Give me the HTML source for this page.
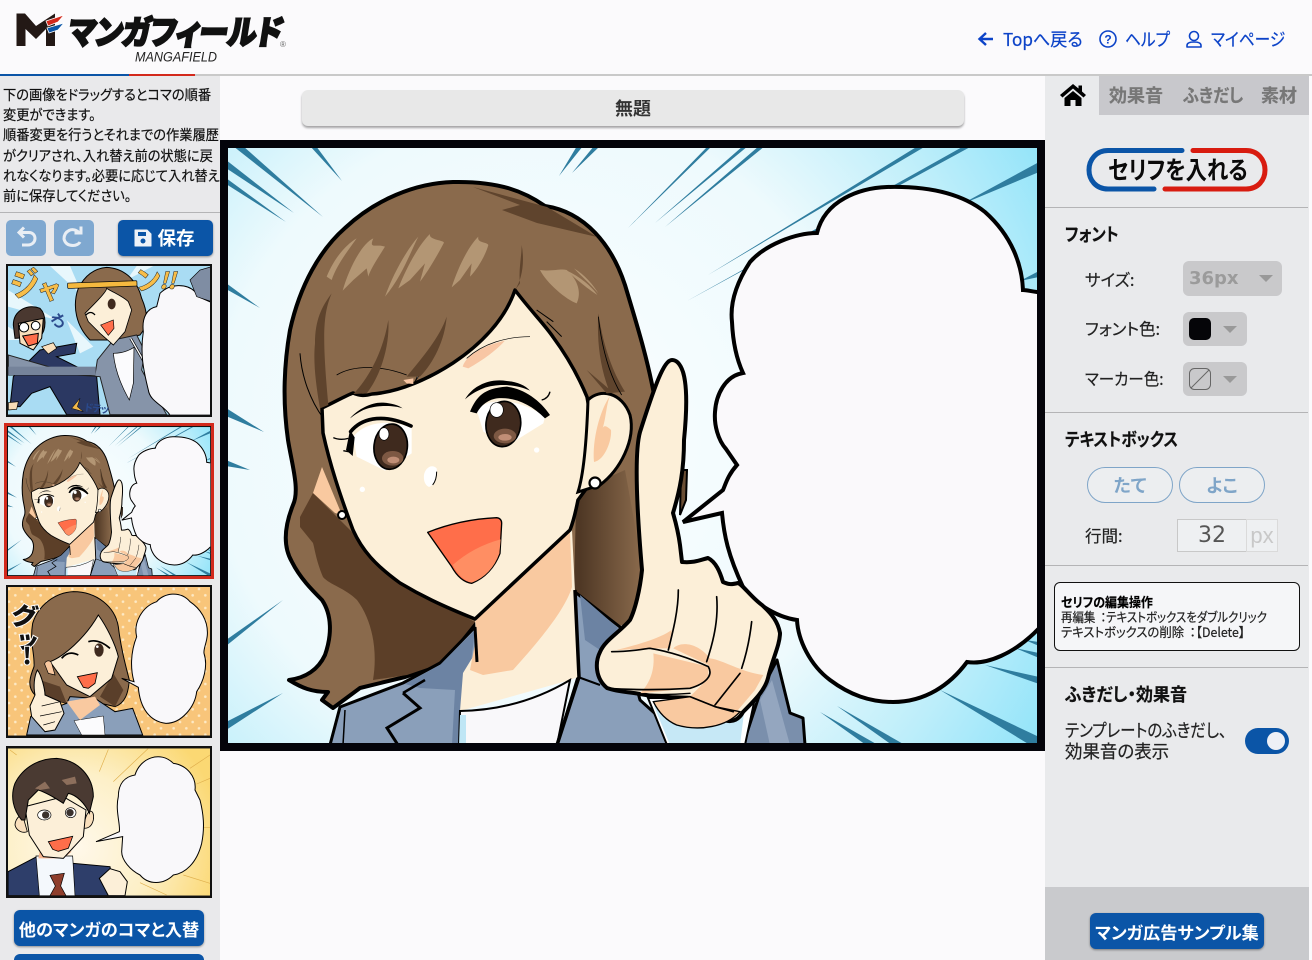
<!DOCTYPE html>
<html lang="ja"><head><meta charset="utf-8"><title>マンガフィールド</title>
<style>
html,body{margin:0;padding:0;background:#fbfafc;width:1312px;height:960px;overflow:hidden}
#root{position:absolute;left:0;top:0;width:1312px;height:960px;overflow:hidden;font-family:"Liberation Sans","Noto Sans CJK JP",sans-serif;color:#111;font-feature-settings:"palt"}
.a{position:absolute;white-space:nowrap;line-height:1}
.s{transform-origin:0 0;-webkit-text-stroke:.2px currentColor}
.j{font-family:"Noto Sans CJK JP","Liberation Sans",sans-serif}
.b{font-weight:700}
.btn{position:absolute;background:#0b55a7;color:#fff;border-radius:6px;box-shadow:0 1px 2px rgba(0,0,0,.4);font-weight:700;display:flex;align-items:center;justify-content:center;white-space:nowrap}
.hr{position:absolute;height:1px;background:#b4b4b6}
.nav{color:#0c43c8;font-size:18px;top:30px}
.tab{color:#777;font-size:18px;font-weight:700;top:86px}
.lab{font-size:16.5px;color:#222}
.sel{position:absolute;background:#c9c9cb;border-radius:6px}
.tri{position:absolute;width:0;height:0;border-left:7px solid transparent;border-right:7px solid transparent;border-top:7px solid #999}
.pill{position:absolute;width:84px;height:34px;border:1px solid #7fa5c8;border-radius:18px;color:#7fa5c8;font-weight:700;font-size:18px;display:flex;align-items:center;justify-content:center;background:#eceef0}
</style></head><body><div id="root">

<!-- panels -->
<div style="position:absolute;left:0;top:76px;width:220px;height:884px;background:#e9e9eb"></div>
<div style="position:absolute;left:1045px;top:76px;width:264px;height:884px;background:#e9eaec"></div>
<div style="position:absolute;left:1045px;top:887px;width:264px;height:73px;background:#c9cacd"></div>
<div style="position:absolute;left:0;top:74px;width:1312px;height:2px;background:#c9c9c9"></div>
<div style="position:absolute;left:0;top:74px;width:129px;height:2px;background:#0b55a7"></div>
<div style="position:absolute;left:129px;top:74px;width:66px;height:2px;background:#d3291c"></div>

<!-- art -->
<svg width="1312" height="960" viewBox="0 0 1312 960" style="position:absolute;left:0;top:0" xmlns="http://www.w3.org/2000/svg">
<defs>
<radialGradient id="sky" gradientUnits="userSpaceOnUse" cx="540" cy="440" r="590">
<stop offset="0" stop-color="#fbfeff"/><stop offset=".55" stop-color="#eefafd"/><stop offset=".8" stop-color="#bdeefa"/><stop offset="1" stop-color="#8fe3f9"/></radialGradient>
<radialGradient id="yel" gradientUnits="userSpaceOnUse" cx="230" cy="800" r="440">
<stop offset="0" stop-color="#fff8ea"/><stop offset=".5" stop-color="#fdf0c8"/><stop offset="1" stop-color="#fbd873"/></radialGradient>
<linearGradient id="rh" gradientUnits="userSpaceOnUse" x1="580" y1="540" x2="642" y2="540"><stop offset="0" stop-color="#4f3825"/><stop offset="1" stop-color="#8a6a4c"/></linearGradient>
<pattern id="dots" width="38" height="38" patternUnits="userSpaceOnUse"><rect width="38" height="38" fill="#f8c57a"/><circle cx="8" cy="8" r="4" fill="#fde9c4"/><circle cx="27" cy="27" r="4" fill="#fde9c4"/></pattern>
<clipPath id="mc"><rect x="228" y="148" width="809" height="595"/></clipPath>
<clipPath id="t1"><rect x="24" y="18" width="606" height="446"/></clipPath>
<clipPath id="t3"><rect x="24" y="21" width="606" height="446"/></clipPath>
<clipPath id="t4"><rect x="24" y="505" width="606" height="442"/></clipPath>
<g id="scene" clip-path="url(#mc)">
<rect x="228" y="148" width="809" height="595" fill="url(#sky)"/>
<g fill="#2f7d9f">
<polygon points="233,146 243,146 323,217"/><polygon points="226,160 226,168 294,213"/><polygon points="226,178 226,184 286,222"/><polygon points="310,146 316,146 342,181"/>
<polygon points="577,146 583,146 559,176"/><polygon points="594,146 600,146 572,173"/>
<polygon points="226,283 226,289 260,308"/><polygon points="226,408 226,416 264,432"/><polygon points="226,640 226,646 283,600"/><polygon points="226,722 226,730 283,693"/><polygon points="226,460 226,466 250,470"/>
<polygon points="708,146 712,146 628,228"/><polygon points="743,146 748,146 655,223"/><polygon points="759,146 765,146 665,227"/>
<polygon points="918,146 926,146 708,275"/><polygon points="964,146 972,146 687,301"/><polygon points="1039,162 1039,172 960,205"/><polygon points="1039,271 1039,277 1020,281"/>
<polygon points="837,706 905,745 892,745"/><polygon points="820,712 878,745 866,745"/><polygon points="940,690 1039,737 1039,745 1030,745"/><polygon points="985,665 1039,677 1039,684"/><polygon points="1015,648 1039,653 1039,658"/><polygon points="1025,640 1039,642 1039,646"/>
</g>
<!-- bubble -->
<path d="M1042 292 L1037 292 C1030 291 1026 290 1023 290 C1022 265 1012 236 985 212 C960 192 925 186 887 187 C860 188 825 200 817 233 C795 233 765 245 750 262 C735 285 730 305 732 322 C733 345 737 360 743 373 C725 376 716 395 715 412 C714 425 718 440 726 449 L737 465 C728 475 726 483 723 490 L683 522 L722 513 C724 535 728 555 743 587 C750 600 775 617 797 620 C798 640 810 665 830 680 C850 695 870 702 893 702 C925 702 950 685 967 662 C985 665 1015 655 1042 625 Z" fill="#faf9fb" stroke="#000" stroke-width="4"/>
<!-- back hair -->
<path d="M453 182C500 181 525 192 545 206C585 212 612 245 625 285C637 325 648 360 655 400L640 632L575 590L473 625L440 665L405 677L360 688L333 708L322 700L328 692C312 692 302 688 289 680C305 678 318 670 325 655C332 635 332 615 322 600C312 590 300 578 292 562C282 545 285 525 293 505C300 490 292 465 288 440C283 405 283 370 290 330C300 285 320 250 345 228C375 200 415 183 453 182Z" fill="#8a6a4c" stroke="#000" stroke-width="4" stroke-linejoin="round"/>
<path d="M681 470L687 470L686 500L680 515Z" fill="#6a4e34" stroke="#000" stroke-width="2"/>
<!-- hair shading -->
<path d="M300 517L313 493L350 530L400 583L475 622L442 663L407 675L373 680C378 650 372 620 357 600C345 588 330 585 323 577C316 560 315 550 313 543L300 527Z" fill="#5c3f28"/>
<path d="M576 505L580 490L625 470L634 520L642 570L630 622L618 627L590 605L574 590Z" fill="url(#rh)"/>
<g fill="#5f442d"><path d="M473 187L547 207L597 237L537 223L502 210L520 205Z"/></g>
<!-- jacket -->
<path d="M330 745L340 707L403 683L440 663L475 627L480 650L463 673L460 745Z" fill="#8a9fba" stroke="#000" stroke-width="3" stroke-linejoin="round"/>
<path d="M575 592L620 627L640 700L690 745L557 745L578 677Z" fill="#8a9fba" stroke="#000" stroke-width="3" stroke-linejoin="round"/>
<path d="M580 595L618 628L600 650L585 640Z" fill="#6c83a3"/>
<path d="M440 665L475 630L470 670L462 700L458 745L452 745L455 690L420 688L405 684Z" fill="#6c83a3"/>
<path d="M403 693L420 708L387 728L398 745" fill="none" stroke="#000" stroke-width="3"/>
<path d="M403 693L425 680" fill="none" stroke="#000" stroke-width="2.5"/>
<path d="M345 710L343 745" fill="none" stroke="#000" stroke-width="1.5"/>
<path d="M578 677L600 685" fill="none" stroke="#000" stroke-width="2"/>
<path d="M777 660L790 713L803 718L805 745L743 745L760 693Z" fill="#7a8fac" stroke="#000" stroke-width="3" stroke-linejoin="round"/>
<path d="M772 680L790 745L770 745L760 700Z" fill="#94a6bf"/>
<!-- neck + shirt -->
<path d="M475 620L572 530L575 592L578 677L570 680L460 711L463 673L477 650Z" fill="#fcefd8"/>
<path d="M475 619L570 532L572 587C565 610 540 640 513 670L483 675L470 670L477 633Z" fill="#f9c9a0"/>
<path d="M460 711Q520 710 570 680L557 745L459 745Z" fill="#f9f8fa" stroke="#000" stroke-width="2"/>
<path d="M460 715L466 715L466 745L459 745Z" fill="#bfe6f5"/>
<path d="M475 627L477 662" stroke="#000" stroke-width="3" fill="none"/>
<path d="M575 590L579 677L557 745" stroke="#000" stroke-width="3.5" fill="none"/>
<!-- left ear -->
<path d="M313 493L322 467L342 515L335 513Z" fill="#f9c9a0"/>
<circle cx="342" cy="515" r="4" fill="#fff" stroke="#000" stroke-width="2"/>
<!-- face -->
<path d="M322 408C335 402 345 396 353 393C360 396 365 396 372 394C400 392 430 378 453 363C480 345 505 320 515 290C530 310 545 325 553 337C570 360 580 380 587 397L600 470L578 500C575 515 572 525 570 530L475 619C440 605 420 595 400 583C375 565 362 550 353 530C340 495 330 465 323 433Z" fill="#fcefd8" stroke="#000" stroke-width="3.500" stroke-linejoin="round"/>
<!-- ear -->
<path d="M588 400C600 388 622 392 630 415C636 440 620 470 600 485L578 492C585 470 587 430 588 400Z" fill="#fcefd8" stroke="#000" stroke-width="3"/>
<path d="M610 396C600 410 592 440 594 462C605 460 612 440 611 430C606 425 603 425 602 430C606 420 606 405 610 396Z" fill="#f9c9a0"/>
<circle cx="595" cy="483" r="5.500" fill="#fff" stroke="#000" stroke-width="2.200"/>
<!-- eyes etc (zoom 10 coords) -->
<g transform="translate(300,400) scale(.33333)">
<path d="M160 110C200 60 280 60 335 85L335 160L255 212L170 170Z" fill="#fff"/>
<ellipse cx="272" cy="140" rx="50" ry="68" fill="#3f2a1e" stroke="#000" stroke-width="5" transform="rotate(6 272 140)"/>
<ellipse cx="278" cy="175" rx="32" ry="22" fill="#7d5843"/>
<ellipse cx="280" cy="180" rx="18" ry="10" fill="#c08e76"/>
<ellipse cx="252" cy="102" rx="15" ry="19" fill="#fff" stroke="#000" stroke-width="2"/>
<path d="M152 95C180 60 240 35 333 78" fill="none" stroke="#000" stroke-width="11" stroke-linecap="round"/>
<path d="M150 90L138 150L158 168L164 112Z" fill="#000"/>
<path d="M100 113Q120 122 145 115M130 152L150 156" fill="none" stroke="#000" stroke-width="4"/>
<path d="M150 55C175 25 220 5 250 8C275 10 295 15 308 25C280 15 225 15 190 30C170 40 160 48 150 55Z" fill="#000"/>
<path d="M530 30C560 -5 650 -10 735 50L730 70L625 135L550 95Z" fill="#fff"/>
<ellipse cx="610" cy="72" rx="52" ry="68" fill="#3f2a1e" stroke="#000" stroke-width="5" transform="rotate(6 610 72)"/>
<ellipse cx="615" cy="108" rx="34" ry="22" fill="#7d5843"/>
<ellipse cx="615" cy="112" rx="20" ry="10" fill="#c08e76"/>
<ellipse cx="590" cy="30" rx="20" ry="22" fill="#fff" stroke="#000" stroke-width="2"/>
<circle cx="187" cy="268" r="8" fill="#fff"/><circle cx="710" cy="150" r="8" fill="#fff"/>
<path d="M372 225C375 205 395 190 410 205C415 230 395 265 385 260C375 255 370 240 372 225Z" fill="#fff"/>
<path d="M410 215Q410 240 398 255" stroke="#000" stroke-width="3" fill="none"/>
<path d="M383 397Q480 358 590 353Q605 355 605 370L600 460Q575 525 515 550Q480 545 455 500Z" fill="#ff6e4a" stroke="#000" stroke-width="4" stroke-linejoin="round"/>
<path d="M458 495Q520 440 602 418L598 460Q575 525 515 548Q482 540 458 495Z" fill="#ff8e63"/>
</g>
<!-- right eye lashes + brows + highlights (zoom 9 coords) -->
<g transform="translate(220,80) scale(.33333)">
<path d="M750 995C770 950 790 925 860 920C910 925 960 960 990 1005L975 1015C930 970 880 950 830 955C800 960 780 980 770 1000Z" fill="#000"/>
<path d="M735 958C760 915 810 895 860 903C890 905 915 915 930 932C890 912 830 910 790 925C765 935 750 945 735 958Z" fill="#000"/>
<path d="M965 960Q985 955 990 935" stroke="#000" stroke-width="4" fill="none"/>
<path d="M728 860C740 820 800 795 855 782C830 810 790 840 745 865Z" fill="#f8c6a4"/>
<path d="M740 835C790 790 860 770 930 770" stroke="#000" stroke-width="2" fill="none"/>
<path d="M350 885C400 855 480 855 560 885" stroke="#000" stroke-width="2.500" fill="none"/>
<path d="M550 900L580 895L580 912L560 910Z" fill="#f8c6a4"/>
<path d="M585 905L620 825L605 875Z" fill="#fff" stroke="#000" stroke-width="2"/>
<g fill="#b39674">
<path d="M320 590C340 540 375 495 410 475C385 510 350 555 335 600Z"/>
<path d="M368 632C385 570 425 490 460 475C445 510 470 490 495 500C470 540 450 570 445 590L440 565L400 600Z"/>
<path d="M495 650C520 580 560 510 595 470C570 520 545 590 495 650Z"/>
<path d="M535 625C560 560 600 490 630 462C625 480 670 480 672 488C650 530 620 580 600 605L615 550L570 600Z"/>
<path d="M695 622C715 560 745 500 775 470C770 490 800 485 805 495C795 530 770 570 750 590L755 550L720 600Z"/>
<path d="M960 570C1000 575 1020 565 1040 570C1075 600 1085 640 1070 670C1040 660 980 610 960 570Z"/>
<path d="M1040 572C1080 590 1115 620 1132 645C1100 625 1060 590 1040 572Z"/>
<path d="M1062 565C1095 585 1120 615 1135 640C1110 610 1085 590 1062 565Z"/>
</g>
<g fill="#5f442d">
<path d="M285 790C285 720 305 680 335 640C310 700 305 760 325 975L300 985C285 900 280 840 285 790Z"/>
<path d="M400 942C450 890 490 810 505 720C510 800 480 890 440 940Z"/>
<path d="M560 890C610 830 660 770 680 710C675 780 640 850 600 890Z"/>
<path d="M1135 700C1150 800 1180 880 1215 935L1160 940L1100 870L1165 925C1140 860 1130 780 1135 700Z"/>
<path d="M905 495C915 550 905 600 885 630L900 610C895 570 905 530 905 495Z"/>
</g>
<path d="M240 820C245 890 270 960 310 1015" stroke="#000" stroke-width="3" fill="none"/>
<path d="M950 690L1000 725M980 725L1025 770" stroke="#000" stroke-width="3" fill="none"/>
<path d="M1135 710C1145 800 1165 880 1205 945" stroke="#000" stroke-width="2.500" fill="none"/>
</g>
<!-- sleeve + hand -->
<path d="M648 698L667 745L745 745L755 698Z" fill="#fff" stroke="#000" stroke-width="2"/>
<path d="M654 706L670 745L740 745L745 705Z" fill="#c6e8f6"/>
<path d="M672 360C664 360 655 385 640 432C635 450 636 500 642 570C640 590 635 610 630 620C620 632 605 640 600 652C595 662 595 678 607 688C618 692 630 692 640 694C660 698 680 697 690 698C700 703 708 705 713 707C718 722 735 727 743 712C755 700 765 690 768 678C772 660 780 645 780 633C778 622 772 614 762 605C752 598 742 584 738 583C730 585 728 584 723 582C720 572 716 562 708 558C700 560 695 563 682 562L680 545C678 530 675 520 673 513C680 490 684 470 684 440C687 410 687 385 683 372C680 363 676 360 672 360Z" fill="#fcefd8" stroke="#000" stroke-width="4" stroke-linejoin="round"/>
<g transform="translate(300,400) scale(.33333)">
<g fill="#f9c9a0">
<path d="M950 750C1010 735 1080 715 1115 690L1112 745L1050 745Z"/>
<path d="M1060 760L1225 800L1225 840L1170 865L1020 880C1050 850 1065 810 1060 760Z"/>
<path d="M1120 745C1140 725 1190 725 1230 775C1270 780 1320 815 1390 825L1365 870L1310 935L1245 920L1170 890L1230 830L1225 795Z"/>
<path d="M1060 905L1170 890L1245 920L1320 935C1280 980 1200 995 1130 975C1095 960 1075 935 1060 905Z" stroke="#000" stroke-width="4"/>
</g>
<g fill="none" stroke="#000" stroke-linecap="round" stroke-linejoin="round">
<path d="M935 755C1000 755 1040 745 1050 745C1110 755 1170 775 1225 800C1240 825 1220 850 1170 865C1090 870 1000 870 920 865" stroke-width="5"/>
<path d="M1000 880C1060 885 1110 885 1170 880" stroke-width="4"/>
<path d="M1135 570C1135 630 1120 690 1105 750" stroke-width="5"/>
<path d="M1250 590C1255 650 1245 710 1220 785" stroke-width="5"/>
<path d="M1355 665C1350 710 1340 760 1325 805" stroke-width="5"/>
<path d="M1320 820L1245 915" stroke-width="5"/>
<path d="M1170 890L1245 920L1300 935" stroke-width="5"/>
</g>
</g>
</g>
</defs>

<!-- main canvas -->
<rect x="220" y="140" width="825" height="611" fill="#04040a"/>
<use href="#scene"/>

<!-- thumb 2 -->
<rect x="4" y="423" width="210" height="156" fill="#d3291c"/>
<rect x="7" y="426" width="204" height="150" fill="#111"/>
<use href="#scene" transform="translate(-49,390.2) scale(.25,.249)"/>

<!-- thumb 1 -->
<rect x="6" y="264" width="206" height="153" fill="#111"/>
<g transform="translate(0,260) scale(.33333)"><g clip-path="url(#t1)">
<rect x="24" y="18" width="606" height="446" fill="#a9dcf3"/>
<g fill="#e8f7fc"><polygon points="24,90 170,180 24,140"/><polygon points="150,18 210,18 250,110"/><polygon points="24,200 90,240 24,240"/><polygon points="410,18 460,18 380,60"/><polygon points="200,180 280,260 240,280"/></g>
<!-- man -->
<path d="M30 440L40 350L120 270L230 250L225 280L170 290L290 350L300 464L200 464L150 380L95 400L60 440Z" fill="#2b3862" stroke="#000" stroke-width="3"/>
<path d="M25 428L55 425L50 448L25 450Z" fill="#f8dcb8" stroke="#000" stroke-width="2"/>
<path d="M40 195C40 150 85 130 120 145C140 165 140 210 120 230L45 235Z" fill="#4a3830" stroke="#000" stroke-width="3"/>
<path d="M55 190L130 175L125 235L100 270L60 250Z" fill="#f9dfbc" stroke="#000" stroke-width="3"/>
<circle cx="72" cy="202" r="14" fill="#fff" stroke="#000" stroke-width="3"/><circle cx="107" cy="197" r="13" fill="#fff" stroke="#000" stroke-width="3"/>
<path d="M68 228L115 220L112 250L85 258Z" fill="#ff6e4a" stroke="#000" stroke-width="3"/>
<path d="M125 260L160 248L170 265L145 282Z" fill="#f9dfbc" stroke="#000" stroke-width="2"/>
<path d="M215 445L240 415L232 440L250 455Z" fill="#f2b84a" stroke="#000" stroke-width="1.500"/>
<!-- woman -->
<path d="M320 22C380 25 415 70 425 115C440 150 450 190 420 225L350 240L270 240C230 200 215 140 235 85C255 45 285 25 320 22Z" fill="#8a6a4c" stroke="#000" stroke-width="3"/>
<path d="M232 345L25 285L25 345L285 345L292 300L340 240L410 225L435 275L425 330L500 464L330 464L300 350Z" fill="#8694a9" stroke="#222" stroke-width="3"/>
<rect x="25" y="320" width="262" height="25" fill="#75839a"/>
<path d="M340 280Q375 280 402 262L400 370L388 420C365 380 345 330 340 280Z" fill="#fbfbfd" stroke="#000" stroke-width="2"/>
<path d="M255 160C285 130 320 95 320 85C345 100 370 110 385 125L395 150L375 215L340 255L300 220L265 185Z" fill="#fcefd8" stroke="#000" stroke-width="2.500"/>
<path d="M258 165Q272 150 285 165" stroke="#000" stroke-width="4" fill="none"/>
<ellipse cx="335" cy="132" rx="12" ry="16" fill="#3f2a1e"/>
<path d="M302 195L340 180L342 205L325 226Z" fill="#ff6e4a" stroke="#000" stroke-width="2"/>
<path d="M392 235L435 310" stroke="#000" stroke-width="8"/><path d="M392 235L435 310" stroke="#fff" stroke-width="4"/>
<!-- bubble -->
<path d="M640 130L595 110L585 95C560 70 510 70 480 100L470 140C440 145 425 175 430 215C420 280 430 330 445 390C450 425 490 435 510 465L640 465Z" fill="#f9f8fa" stroke="#000" stroke-width="3"/>
<path d="M570 60L600 30L635 20L635 125L590 110Z" fill="#7f8da3" stroke="#000" stroke-width="2"/>
<rect x="203" y="66" width="208" height="16" rx="3" fill="#f5b93f" stroke="#000" stroke-width="2" transform="rotate(-2 300 76)"/>
<g font-family="Noto Sans CJK JP,sans-serif" font-weight="700" fill="#f7bd48" stroke="#222" stroke-width="3" paint-order="stroke">
<text x="36" y="112" font-size="92" transform="rotate(-12 40 100)">ジ</text><text x="118" y="120" font-size="76" transform="rotate(-8 120 110)">ャ</text>
<text x="412" y="90" font-size="78" transform="rotate(-5 415 85)">ン</text><text x="478" y="86" font-size="66" font-style="italic">!!</text>
</g>
<text x="150" y="200" font-family="Noto Sans CJK JP,sans-serif" font-size="46" font-weight="700" fill="#2b4a8c" transform="rotate(60 175 185) translate(0,0)">わ</text>
<text x="252" y="452" font-family="Noto Sans CJK JP,sans-serif" font-size="30" font-weight="700" fill="#2b4a8c" textLength="75" transform="rotate(6 252 452)">ドテッ</text>
</g></g>

<!-- thumb 3 -->
<rect x="6" y="585" width="206" height="153" fill="#111"/>
<g transform="translate(0,580) scale(.33333)"><g clip-path="url(#t3)">
<rect x="24" y="21" width="606" height="446" fill="url(#dots)"/>
<path d="M220 35C290 35 345 80 355 140C362 200 375 250 388 300C385 340 375 370 345 380L280 365L200 370L105 345C80 320 90 290 102 260C105 220 88 190 98 130C115 75 165 38 220 35Z" fill="#8a6a4c" stroke="#000" stroke-width="3"/>
<path d="M125 350L120 300L180 320L200 370Z" fill="#5a3f2a"/><path d="M300 350L340 280L370 330L345 380Z" fill="#5a3f2a"/>
<path d="M80 465L92 410L200 370L210 350L285 355L345 395L398 385L428 465Z" fill="#8a9fba" stroke="#000" stroke-width="3"/>
<path d="M222 422L310 408L315 465L245 465Z" fill="#fbfbfd" stroke="#000" stroke-width="1.500"/>
<path d="M200 365L285 350L300 375L240 420Z" fill="#f9c9a0"/>
<path d="M150 245C190 230 255 175 295 105C320 140 345 190 355 230L335 295L270 350L200 315Z" fill="#fcefd8" stroke="#000" stroke-width="3"/>
<path d="M135 255C130 245 150 235 155 250L165 285L145 280Z" fill="#f9c9a0" stroke="#000" stroke-width="2"/>
<path d="M185 235Q205 210 235 225" stroke="#000" stroke-width="5" fill="none"/>
<ellipse cx="297" cy="210" rx="14" ry="20" fill="#3f2a1e"/><circle cx="292" cy="200" r="4" fill="#fff"/>
<path d="M265 185Q295 175 330 205" stroke="#000" stroke-width="5" fill="none"/>
<path d="M232 290L292 278L285 310L265 325L250 322Z" fill="#ff6e4a" stroke="#000" stroke-width="2.500"/>
<path d="M112 270C125 285 135 330 135 345L180 365L192 400L165 450L135 455L95 410L90 378L105 345C100 320 102 290 112 270Z" fill="#fcefd8" stroke="#000" stroke-width="3"/>
<path d="M125 378L180 365M120 408L185 395M130 435L165 425" stroke="#000" stroke-width="2"/>
<path d="M410 170C400 130 425 80 470 65C490 40 540 30 570 65C600 85 625 120 622 165C620 190 610 205 612 220C625 260 610 305 590 335C585 380 545 430 498 430C450 425 420 385 415 322L365 295L402 305C392 270 390 220 410 170Z" fill="#f9f8fa" stroke="#000" stroke-width="3"/>
<g font-family="Noto Sans CJK JP,sans-serif" font-weight="900" fill="#111" stroke="#fff" stroke-width="6" paint-order="stroke">
<text x="36" y="132" font-size="78" transform="rotate(12 50 100)">グ</text><text x="55" y="200" font-size="70" transform="rotate(12 60 170)">ッ</text><text x="68" y="252" font-size="68">!</text>
</g>
</g></g>

<!-- thumb 4 -->
<rect x="6" y="746" width="206" height="152" fill="#111"/>
<g transform="translate(0,580) scale(.33333)"><g clip-path="url(#t4)">
<rect x="24" y="505" width="606" height="442" fill="url(#yel)"/>
<g stroke="#e0b04e" stroke-width="2"><path d="M30 510L50 525M325 508L298 575M445 505L340 605M630 525L570 565M630 595L590 612M630 742L610 742M630 910L550 885M500 945L420 908"/></g>
<path d="M24 875L110 830L130 880L220 850L330 860L345 947L24 947Z" fill="#2e3e6a" stroke="#000" stroke-width="3"/>
<path d="M108 828L218 828L225 947L118 947Z" fill="#f4f8fc" stroke="#000" stroke-width="2"/>
<path d="M150 886L193 880L182 918L198 947L150 947L166 918Z" fill="#8e3e2c" stroke="#000" stroke-width="2"/>
<path d="M115 835L190 835L215 815L120 810Z" fill="#f7b48e"/>
<path d="M72 720C70 690 45 715 45 735C50 755 70 760 82 755Z" fill="#f9dfbc" stroke="#000" stroke-width="2.500"/>
<path d="M255 720C265 680 285 690 280 720C275 740 265 745 250 745Z" fill="#f9dfbc" stroke="#000" stroke-width="2.500"/>
<path d="M75 680L190 650L258 690L250 770L190 835L130 830L88 765Z" fill="#fcefd8" stroke="#000" stroke-width="3"/>
<path d="M65 720C40 690 30 650 45 610C70 560 120 535 170 535C235 540 280 590 280 650L268 700C255 670 230 645 205 640L190 670C160 650 130 635 115 630L85 660L75 720Z" fill="#4a3a32" stroke="#000" stroke-width="3"/>
<g fill="#8d6f5c"><path d="M105 625L135 605L150 625L120 630Z"/><path d="M185 600L225 590L230 610L200 615Z"/></g>
<ellipse cx="133" cy="705" rx="20" ry="15" fill="#fff" stroke="#000" stroke-width="2"/><ellipse cx="212" cy="698" rx="16" ry="15" fill="#fff" stroke="#000" stroke-width="2"/>
<circle cx="137" cy="705" r="11" fill="#3b322e"/><circle cx="210" cy="698" r="11" fill="#3b322e"/>
<path d="M145 785L218 769L205 805L175 814L158 808Z" fill="#ff6e4a" stroke="#000" stroke-width="2.500"/>
<path d="M298 895L330 866L360 875L382 905L375 947L325 947Z" fill="#fcefd8" stroke="#000" stroke-width="3"/>
<path d="M355 650C355 610 375 590 405 585C420 535 480 510 520 550C560 555 590 590 585 630L600 660C610 700 615 740 605 790C590 850 555 880 520 885C490 915 445 915 420 885C390 870 365 840 365 815L368 770L288 785L358 755C362 735 345 690 355 650Z" fill="#f9f8fa" stroke="#000" stroke-width="3"/>
</g></g>

<!-- logo -->
<path d="M16.500 13.500H25L36 26L55 13.500V46H46V29L36 39L25.500 29V46H16.500Z" fill="#231815"/>
<path d="M46 21L64 15L58 22L48 26Z" fill="#d3291c" stroke="#fff" stroke-width=".8"/><path d="M47 28L64 23L58 30L49 33Z" fill="#0b55a7" stroke="#fff" stroke-width=".8"/>
<text transform="translate(60,44) skewX(-9)" x="7" y="0" font-family="Noto Sans CJK JP,sans-serif" font-weight="900" font-size="33" fill="#111" stroke="#111" stroke-width="2" textLength="214" lengthAdjust="spacingAndGlyphs">マンガフィールド</text>
<text x="135" y="61.500" font-family="Liberation Sans,sans-serif" font-style="italic" font-size="13.500" fill="#222" textLength="82" lengthAdjust="spacingAndGlyphs">MANGAFIELD</text>
<text x="280" y="47" font-family="Liberation Sans,sans-serif" font-size="8" fill="#666">®</text>

<!-- nav icons -->
<path d="M993 39H980M986 33L979.500 39L986 45" fill="none" stroke="#0c43c8" stroke-width="2.400"/>
<circle cx="1108" cy="39" r="8" fill="none" stroke="#0c43c8" stroke-width="1.600"/>
<text x="1108" y="43.500" text-anchor="middle" font-family="Liberation Sans,sans-serif" font-weight="700" font-size="12" fill="#0c43c8">?</text>
<circle cx="1194" cy="36" r="4.500" fill="none" stroke="#0c43c8" stroke-width="1.600"/>
<path d="M1187 47V45.500C1187 43 1190 42 1194 42C1198 42 1201 43 1201 45.500V47Z" fill="none" stroke="#0c43c8" stroke-width="1.600" stroke-linejoin="round"/>

<!-- tabs bg + home -->
<rect x="1099" y="76" width="210" height="39" fill="#c8c8cc"/>
<path d="M1073 84L1060 95L1062.500 97.500L1073 88.500L1083.500 97.500L1086 95L1082 91.500V85.500H1078.500V88.500ZM1064.500 98V106H1070.500V100H1075.500V106H1081.500V98L1073 91Z" fill="#000"/>

<!-- buttons art -->
<path d="M1182 150.500H1108C1096 150.500 1089 160 1089 170C1089 180 1096 189 1108 189H1154" fill="none" stroke="#0b55a7" stroke-width="5" stroke-linecap="round"/>
<path d="M1193 150.500H1246C1258 150.500 1265 160 1265 170C1265 180 1258 189 1246 189H1165" fill="none" stroke="#d81c10" stroke-width="5" stroke-linecap="round"/>

<!-- undo / redo -->
<rect x="6" y="220" width="40" height="36" rx="5" fill="#7fa8d0"/><rect x="54" y="220" width="40" height="36" rx="5" fill="#7fa8d0"/>
<path d="M21 232.500H29C33 232.500 35 235.500 35 238.500C35 242 32 245 28 245H22M24 227.500L19 232.500L24 237.500" fill="none" stroke="#e9eef4" stroke-width="3"/>
<path d="M79 232.500C76 229.500 72 229 69 230.500C65 232.500 64 236 64 239C65 243 68 245.500 73 245.500C76 245.500 79 244 80 242M81 226.500V233H74.500" fill="none" stroke="#e9eef4" stroke-width="3"/>
</svg>

<!-- nav text -->
<div class="a j nav s" style="left:1003px;transform:scaleX(.95)">Topへ戻る</div>
<div class="a j nav s" style="left:1125px;transform:scaleX(.87)">ヘルプ</div>
<div class="a j nav s" style="left:1211px;transform:scaleX(.87)">マイページ</div>

<!-- tabs text -->
<div class="a j tab s" style="left:1109px">効果音</div>
<div class="a j tab s" style="left:1183px;transform:scaleX(.91)">ふきだし</div>
<div class="a j tab s" style="left:1261px">素材</div>

<!-- left text -->
<div class="a j s" style="left:3px;top:85px;font-size:14px;line-height:20.200px;color:#111;white-space:nowrap;transform:scaleX(.945)">下の画像をドラッグするとコマの順番<br>変更ができます。<br>順番変更を行うとそれまでの作業履歴<br>がクリアされ、入れ替え前の状態に戻<br>れなくなります。必要に応じて入れ替え<br>前に保存してください。</div>
<div class="hr" style="left:0;top:212px;width:220px"></div>

<!-- save -->
<div class="btn j" style="left:118px;top:220px;width:95px;height:36px;font-size:18.500px;border-radius:5px;padding-left:21px;box-sizing:border-box">保存</div>
<svg width="18" height="18" viewBox="0 0 18 18" style="position:absolute;left:134px;top:229px"><path d="M1 1H13L17 5V17H1Z" fill="#eef2f8" stroke="#eef2f8" stroke-linejoin="round"/><rect x="4" y="3" width="8" height="4" fill="#0b55a7"/><circle cx="9" cy="12" r="2.500" fill="#0b55a7"/></svg>

<div class="btn j" style="left:14px;top:910px;width:190px;height:36px;font-size:17.200px">他のマンガのコマと入替</div>
<div class="btn" style="left:14px;top:954px;width:190px;height:6px;border-radius:6px 6px 0 0;box-shadow:none"></div>

<!-- title -->
<div class="a j b" style="left:302px;top:90px;width:662px;height:36px;background:#e8e8e8;border-radius:6px;box-shadow:0 2px 2px rgba(0,0,0,.35);display:flex;align-items:center;justify-content:center;font-size:18px;color:#333">無題</div>

<!-- right panel -->
<div class="a j b" style="left:1108px;top:157px;font-size:25px;color:#0a0a0a;transform-origin:0 0;transform:scaleX(.85)">セリフを入れる</div>
<div class="hr" style="left:1045px;top:207px;width:263px"></div>
<div class="a j b s" style="left:1065px;top:225px;font-size:18px;transform:scaleX(.86)">フォント</div>
<div class="a j lab s" style="left:1085px;top:271px">サイズ:</div>
<div class="sel" style="left:1183px;top:261px;width:99px;height:35px"></div>
<div class="a b" style="left:1189px;top:270px;font-family:'DejaVu Sans',sans-serif;font-size:18px;color:#9b9b9b">36px</div>
<div class="tri" style="left:1259px;top:275px"></div>

<div class="a j lab s" style="left:1085px;top:320px">フォント色:</div>
<div class="sel" style="left:1183px;top:312px;width:64px;height:34px"></div>
<div style="position:absolute;left:1189px;top:318px;width:22px;height:22px;background:#050508;border-radius:5px"></div>
<div class="tri" style="left:1223px;top:326px"></div>

<div class="a j lab s" style="left:1085px;top:370px;transform:scaleX(.94)">マーカー色:</div>
<div class="sel" style="left:1183px;top:362px;width:64px;height:34px"></div>
<svg width="24" height="24" viewBox="0 0 24 24" style="position:absolute;left:1188px;top:367px"><rect x="1.500" y="1.500" width="21" height="21" rx="5" fill="none" stroke="#666" stroke-width="1"/><path d="M3 21L21 3" stroke="#666" stroke-width="1"/></svg>
<div class="tri" style="left:1223px;top:376px"></div>
<div class="hr" style="left:1045px;top:412px;width:263px"></div>

<div class="a j b s" style="left:1065px;top:430px;font-size:18px;transform:scaleX(.87)">テキストボックス</div>
<div class="pill j" style="left:1087px;top:467px">たて</div>
<div class="pill j" style="left:1179px;top:467px">よこ</div>
<div class="a j lab s" style="left:1085px;top:527px">行間:</div>
<div class="a" style="left:1177px;top:519px;width:68px;height:31px;border:1px solid #c8c8c8;background:#eef0f2;font:22px 'DejaVu Sans',sans-serif;color:#555;text-align:center;line-height:32px">32</div>
<div class="a" style="left:1246px;top:519px;width:30px;height:31px;border:1px solid #dadada;background:#eef0f2;font:22px 'Liberation Sans',sans-serif;color:#c8c8c8;text-align:center;line-height:31px">px</div>
<div class="hr" style="left:1045px;top:565px;width:263px"></div>

<div class="a j" style="left:1054px;top:582px;width:244px;height:67px;background:#f5f6f8;border:1.500px solid #111;border-radius:6px"></div>
<div class="a j b s" style="left:1061px;top:595px;font-size:13px;color:#000;transform:scaleX(.92)">セリフの編集操作</div>
<div class="a j s" style="left:1061px;top:610px;font-size:13px;color:#222;transform:scaleX(.88)">再編集 &nbsp;：テキストボックスをダブルクリック</div>
<div class="a j s" style="left:1061px;top:625px;font-size:13px;color:#222;transform:scaleX(.95)">テキストボックスの削除 &nbsp;：【Delete】</div>
<div class="hr" style="left:1045px;top:667px;width:263px"></div>

<div class="a j b s" style="left:1065px;top:685px;font-size:18px;transform:scaleX(.945)">ふきだし・効果音</div>
<div class="a j s" style="left:1065px;top:721px;font-size:18px;color:#222;transform:scaleX(.86)">テンプレートのふきだし、</div>
<div class="a j s" style="left:1065px;top:742px;font-size:18px;color:#222;transform:scaleX(.97)">効果音の表示</div>
<div style="position:absolute;left:1245px;top:728px;width:44px;height:26px;border-radius:13px;background:#0b55a7"></div>
<div style="position:absolute;left:1267px;top:732px;width:18px;height:18px;border-radius:50%;background:#eef0f6"></div>

<div class="btn j" style="left:1090px;top:913px;width:174px;height:36px;font-size:17.200px">マンガ広告サンプル集</div>
</div></body></html>
